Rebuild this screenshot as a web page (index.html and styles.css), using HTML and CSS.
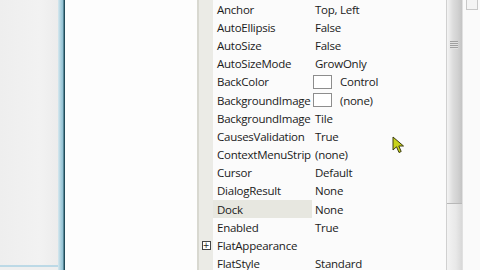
FILE: index.html
```html
<!DOCTYPE html>
<html>
<head>
<meta charset="utf-8">
<link rel="stylesheet" href="styles.css">
</head>
<body>
<div class="screen">
  <div class="left-pane">
    <div class="left-fill"></div>
    <div class="left-bottom"></div>
  </div>
  <div class="frame-edge"></div>
  <div class="canvas"></div>
  <div class="grid">
    <div class="row"><span class="margin"></span><span class="name">Anchor</span><span class="value">Top, Left</span></div>
    <div class="row"><span class="margin"></span><span class="name">AutoEllipsis</span><span class="value">False</span></div>
    <div class="row"><span class="margin"></span><span class="name">AutoSize</span><span class="value">False</span></div>
    <div class="row"><span class="margin"></span><span class="name">AutoSizeMode</span><span class="value">GrowOnly</span></div>
    <div class="row"><span class="margin"></span><span class="name">BackColor</span><span class="value"><i class="swatch"></i>Control</span></div>
    <div class="row"><span class="margin"></span><span class="name">BackgroundImage</span><span class="value"><i class="swatch"></i>(none)</span></div>
    <div class="row"><span class="margin"></span><span class="name">BackgroundImage</span><span class="value">Tile</span></div>
    <div class="row"><span class="margin"></span><span class="name">CausesValidation</span><span class="value">True</span></div>
    <div class="row"><span class="margin"></span><span class="name">ContextMenuStrip</span><span class="value">(none)</span></div>
    <div class="row"><span class="margin"></span><span class="name">Cursor</span><span class="value">Default</span></div>
    <div class="row"><span class="margin"></span><span class="name">DialogResult</span><span class="value">None</span></div>
    <div class="row"><span class="margin"></span><span class="name selected">Dock</span><span class="value">None</span></div>
    <div class="row"><span class="margin"></span><span class="name">Enabled</span><span class="value">True</span></div>
    <div class="row"><span class="margin"><i class="expander">+</i></span><span class="name">FlatAppearance</span><span class="value"></span></div>
    <div class="row"><span class="margin"></span><span class="name">FlatStyle</span><span class="value">Standard</span></div>
  </div>
  <div class="scrollbar">
    <div class="thumb"><span class="grip"></span></div>
    <div class="track"></div>
  </div>
  <div class="right-pane">
    <div class="mini-box"></div>
  </div>
  <svg class="cursor" width="14" height="18" viewBox="0 0 14 18">
    <path d="M1 1 L1 14 L4.5 10.8 L7 16.5 L9.2 15.5 L6.8 10 L11.5 10 Z" fill="#c8d21a" stroke="#3a3a10" stroke-width="1"/>
  </svg>
</div>
</body>
</html>
```
FILE: styles.css
```css
html, body {
  margin: 0;
  padding: 0;
  background: #f8f8f8;
}
.screen {
  position: relative;
  display: flex;
  width: 480px;
  height: 270px;
  overflow: hidden;
  font-family: "Open Sans", "Noto Sans", sans-serif;
  font-size: 11.5px;
  color: #1a1a1a;
}
.left-pane {
  width: 58px;
  display: flex;
  flex-direction: column;
  background: #efefef;
}
.left-fill {
  flex: 1;
  background: linear-gradient(to right, #eeeeee 0, #f2f2f2 40px, #ececec 58px);
}
.left-bottom {
  height: 2px;
  margin-bottom: 3px;
  background: #bcd9e6;
}
.frame-edge {
  width: 7px;
  background: linear-gradient(to right, #d6e8ef 0, #a9cfdd 3px, #8fc0d2 5px, #24505e 6px, #1e4654 7px);
}
.canvas {
  width: 132px;
  background: #fdfdfd;
}
.grid {
  width: 249px;
  display: flex;
  flex-direction: column;
  background: #fbfbfb;
}
.row {
  flex-shrink: 0;
  height: 18.2px;
  display: grid;
  grid-template-columns: 16px 99px 1fr;
  align-items: stretch;
}
.margin {
  background: #ebebe6;
  border-left: 2px solid #d8d8d0;
  box-sizing: border-box;
  display: flex;
  align-items: center;
  justify-content: center;
}
.name, .value {
  display: flex;
  align-items: center;
  white-space: nowrap;
  overflow: hidden;
  letter-spacing: -0.25px;
}
.name {
  padding-left: 4px;
}
.value {
  padding-left: 3px;
}
.selected {
  background: #e7e7e0;
}
.swatch {
  display: inline-block;
  width: 17px;
  height: 12px;
  border: 1px solid #8d8d8d;
  background: #ffffff;
  margin-right: 8px;
  margin-left: -2px;
}
.expander {
  display: flex;
  align-items: center;
  justify-content: center;
  width: 7px;
  height: 7px;
  border: 1px solid #444;
  background: #fff;
  font-style: normal;
  font-size: 8px;
  line-height: 1;
  color: #222;
  font-family: "DejaVu Sans", sans-serif;
}
.scrollbar {
  width: 16px;
  display: flex;
  flex-direction: column;
  border-left: 1px solid #d0d0d0;
  box-sizing: border-box;
  background: #eeeeee;
}
.thumb {
  height: 203px;
  background: linear-gradient(to right, #f4f4f4 0, #dcdcdc 40%, #d2d2d2 70%, #c4c4c4 100%);
  border-bottom: 1px solid #b8b8b8;
  position: relative;
}
.grip {
  position: absolute;
  left: 3px;
  top: 41px;
  width: 8px;
  height: 8px;
  background: repeating-linear-gradient(to bottom, #a0a0a0 0, #a0a0a0 1px, #e2e2e2 1px, #e2e2e2 2px);
}
.track {
  flex: 1;
  background: linear-gradient(to right, #f3f3f3 0, #e8e8e8 60%, #d8d8d8 100%);
}
.right-pane {
  flex: 1;
  background: #fafafa;
  border-left: 1px solid #e0e0e0;
  padding: 0 2px 0 3px;
}
.mini-box {
  height: 9px;
  border: 1px solid #c8c8c8;
  border-top: none;
  background: #f4f4f4;
}
.cursor {
  position: absolute;
  left: 392px;
  top: 136px;
}
```
